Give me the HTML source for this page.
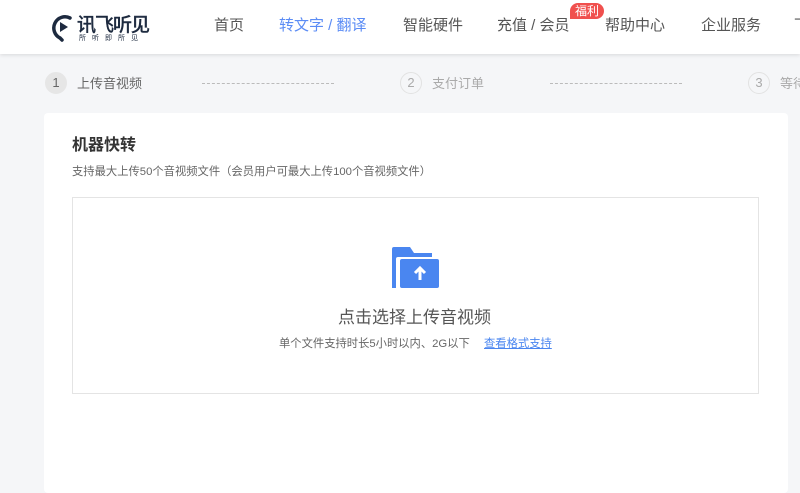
<!DOCTYPE html>
<html><head><meta charset="utf-8"><style>
*{margin:0;padding:0;box-sizing:border-box}
body{width:800px;height:480px;overflow:hidden;background:#f5f6f8;font-family:"Liberation Sans","Noto Sans CJK SC",sans-serif;position:relative}
.hd{position:absolute;left:0;top:0;width:800px;height:54px;background:#fff;box-shadow:0 1px 4px rgba(0,0,0,.12)}
.nav{position:absolute;top:16px;font-size:15px;color:#555;white-space:nowrap;line-height:20px}
.a{position:absolute;white-space:nowrap}
.c{position:absolute;top:72px;width:22px;height:22px;border-radius:50%;font-size:13px;line-height:20px;text-align:center;color:#aaa;border:1px solid #e2e2e2}
.st{position:absolute;top:75px;font-size:13px;color:#aaa;line-height:17px;white-space:nowrap}
.dl{position:absolute;top:83px;border-top:1px dashed #bbb;height:0}
</style></head><body>
<div class="hd">
<svg style="position:absolute;left:50px;top:12px" width="26" height="30" viewBox="0 0 26 30"><path d="M20 6A10 10 0 1 0 10 26l2 2" fill="none" stroke="#1d2a3f" stroke-width="3.5" stroke-linecap="round"/><path d="M10 10l8 5-8 5z" fill="#1d2a3f"/></svg>
<div class="a" style="left:77px;top:10px;font-size:19px;color:#1d2a3f;letter-spacing:-1px;-webkit-text-stroke:0.6px #1d2a3f">讯飞听见</div>
<div class="a" style="left:79px;top:33px;font-size:7px;color:#1d2a3f;letter-spacing:6px">所听即所见</div>
<div class="nav" style="left:214px">首页</div>
<div class="nav" style="left:279px;color:#5b8cf5">转文字 / 翻译</div>
<div class="nav" style="left:403px">智能硬件</div>
<div class="nav" style="left:497px">充值 / 会员</div>
<div class="a" style="left:570px;top:3px;background:#f0504e;color:#fff;font-size:12px;line-height:16px;padding:0 5px;border-radius:8px 8px 8px 0">福利</div>
<div class="nav" style="left:605px">帮助中心</div>
<div class="nav" style="left:701px">企业服务</div>
<div class="nav" style="left:794px">下</div>
</div>
<div class="c" style="left:45px;background:#e6e6e6;border-color:#e6e6e6;color:#666">1</div>
<div class="st" style="left:77px;color:#666">上传音视频</div>
<div class="dl" style="left:202px;width:132px"></div>
<div class="c" style="left:400px">2</div>
<div class="st" style="left:432px">支付订单</div>
<div class="dl" style="left:550px;width:132px"></div>
<div class="c" style="left:748px">3</div>
<div class="st" style="left:780px">等待</div>
<div class="a" style="left:44px;top:113px;width:744px;height:380px;background:#fff;border-radius:4px"></div>
<div class="a" style="left:72px;top:131px;font-size:16px;font-weight:bold;color:#333">机器快转</div>
<div class="a" style="left:72px;top:163px;font-size:11.3px;color:#666">支持最大上传50个音视频文件（会员用户可最大上传100个音视频文件）</div>
<div class="a" style="left:72px;top:197px;width:687px;height:197px;border:1px solid #e4e4e4"></div>
<svg style="position:absolute;left:392px;top:247px" width="48" height="41" viewBox="0 0 48 41"><path d="M0 2a2 2 0 0 1 2-2h16l4 6h18v4H6a2 2 0 0 0-2 2v29H0z" fill="#4a86f0"/><rect x="8" y="12" width="39" height="29" rx="2" fill="#4a86f0"/><path d="M28 33V21M23 26l5-5 5 5" fill="none" stroke="#fff" stroke-width="3"/></svg>
<div class="a" style="left:338px;top:303px;font-size:17px;color:#555">点击选择上传音视频</div>
<div class="a" style="left:279px;top:335px;font-size:11.3px;color:#666">单个文件支持时长5小时以内、2G以下</div>
<div class="a" style="left:484px;top:335px;font-size:11.3px;color:#4a86f0;text-decoration:underline">查看格式支持</div>
</body></html>
